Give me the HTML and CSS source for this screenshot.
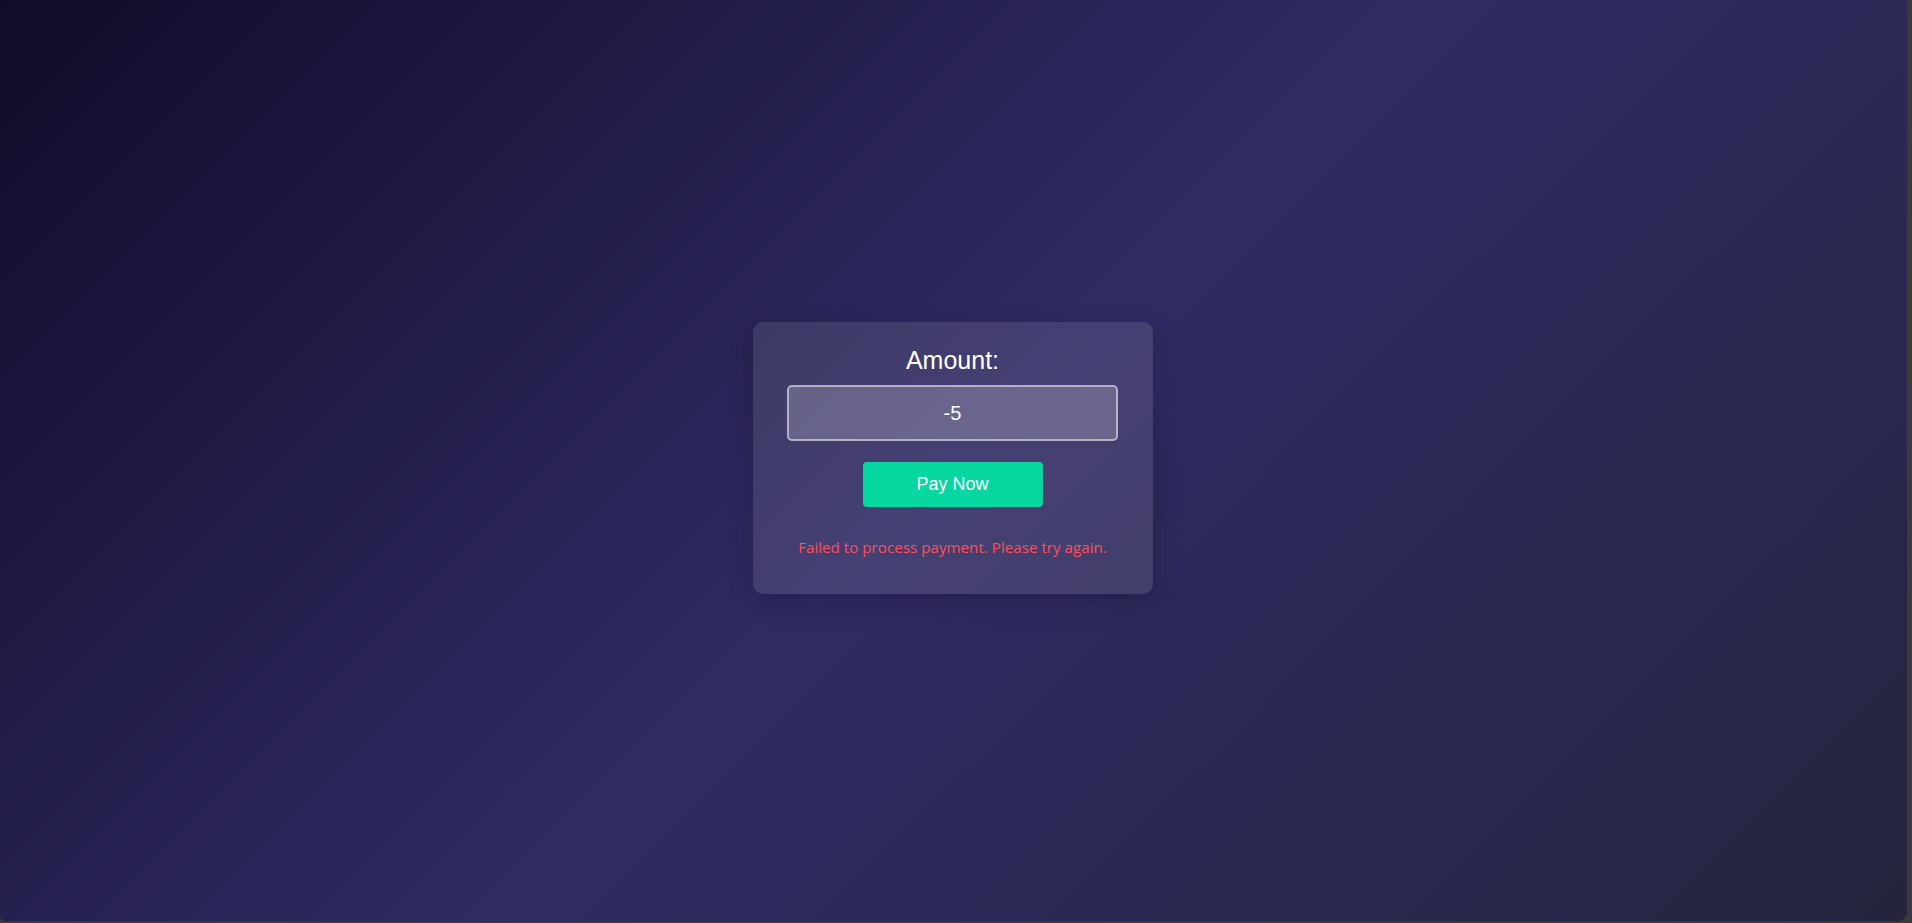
FILE: index.html
```html
<!DOCTYPE html>
<html lang="en">
<head>
<meta charset="utf-8">
<title>Payment</title>
<link rel="stylesheet" href="styles.css">
</head>
<body>
<div class="screen">
  <div class="card">
    <label class="label" for="amount">Amount:</label>
    <input class="amount" id="amount" type="text" value="-5">
    <button class="pay" type="button">Pay Now</button>
    <p class="error">Failed to process payment. Please try again.</p>
  </div>
</div>
</body>
</html>
```
FILE: styles.css
```css
html, body {
  margin: 0;
  padding: 0;
  height: 100%;
  background: #3a3a3c;
  overflow: hidden;
}
.screen {
  width: calc(100% - 5px);
  height: 921px;
  border-radius: 0 0 9px 5px;
  background: linear-gradient(135deg, #0f0c29 0%, #302b63 50%, #24243e 100%);
  display: flex;
  align-items: center;
  justify-content: center;
}
.card {
  width: 400px;
  height: 272px;
  box-sizing: border-box;
  margin-top: -5px;
  margin-left: -2px;
  padding-top: 24px;
  border-radius: 10px;
  background: rgba(255, 255, 255, 0.1);
  box-shadow: 0 8px 24px rgba(0, 0, 0, 0.18);
  display: flex;
  flex-direction: column;
  align-items: center;
}
.label {
  font-family: "Liberation Sans", Arial, sans-serif;
  font-size: 25px;
  line-height: 28px;
  color: #ffffff;
}
.amount {
  margin-top: 11px;
  width: 331px;
  height: 56px;
  box-sizing: border-box;
  border: 2px solid rgba(255, 255, 255, 0.5);
  border-radius: 5px;
  background: rgba(255, 255, 255, 0.2);
  color: #ffffff;
  font-family: "Liberation Sans", Arial, sans-serif;
  font-size: 20px;
  text-align: center;
  outline: none;
  padding: 0;
}
.pay {
  margin-top: 21px;
  width: 180px;
  height: 45px;
  border: none;
  border-radius: 4px;
  background: #06d6a0;
  color: #ffffff;
  font-family: "Liberation Sans", Arial, sans-serif;
  font-size: 18px;
  cursor: pointer;
  padding: 0;
}
.error {
  margin: 29px 0 0;
  font-family: "Open Sans", "Noto Sans", sans-serif;
  font-size: 15.2px;
  line-height: 22px;
  color: #f5515f;
}
```
